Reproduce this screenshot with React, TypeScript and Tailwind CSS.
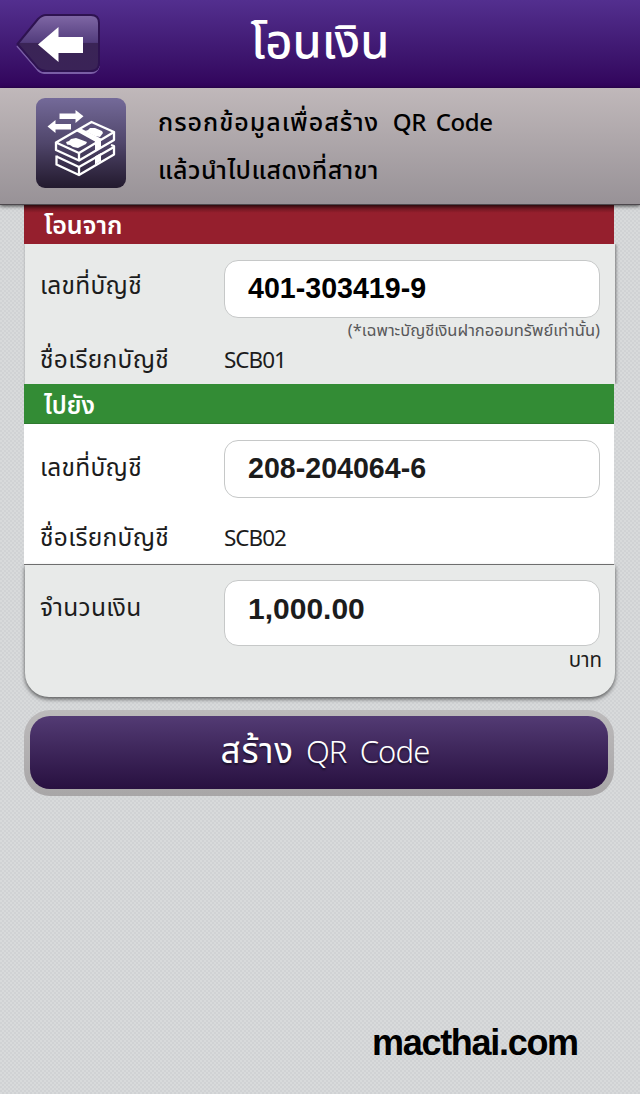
import React from 'react';

interface FieldBoxProps {
  value: string;
  className?: string;
}

function BackButton() {
  return (
    <button type="button" aria-label="Back" className="h-[62px] w-[86px]">
      <svg width="86" height="62" viewBox="0 0 86 62" fill="none">
        <defs>
          <linearGradient id="backTop" x1="0" y1="0" x2="0" y2="1">
            <stop offset="0" stopColor="#8068a6" />
            <stop offset="0.49" stopColor="#523c7c" />
            <stop offset="0.5" stopColor="#3a2456" />
            <stop offset="1" stopColor="#3a2357" />
          </linearGradient>
        </defs>
        <path d="M1 33 L21 56 Q24 60 28 60 H75 Q81 60 83 53" stroke="#7a5ea6" strokeWidth="1.800" />
        <path
          d="M1.500 31 L22 6 Q26 2 30 2 H75 Q83 2 83 10 V50 Q83 58 75 58 H30 Q26 58 22 55 Z"
          fill="url(#backTop)"
          stroke="#2e1350"
          strokeWidth="2"
        />
        <path d="M22 31.500 L42.500 14 V24 H67 V40 H42.500 V49 Z" fill="#fff" />
      </svg>
    </button>
  );
}

function MoneyIcon() {
  return (
    <div className="h-[90px] w-[90px] shrink-0 overflow-hidden rounded-[9px] bg-linear-to-b from-[#746a99] via-[#50466b] to-[#231a2e]">
      <svg width="90" height="90" viewBox="0 0 90 90" fill="none">
        <path d="M23.500 15.500 H39.500 V12 L47.500 18.300 L39.500 25 V21 H23.500 Z" fill="#fff" />
        <path d="M35 26 H19.500 V22 L11.500 28.500 L19.500 35 V31.500 H35 Z" fill="#fff" />
        <g stroke="#fff" strokeWidth="2.300" strokeLinejoin="round">
          <path d="M20 44.500 L55.500 24 L78 34 L43 55 Z" />
          <path d="M20 44.500 V52 L43 62.500 L78 42 V34" />
          <path d="M43 55 V62.500" />
          <path d="M20.500 57.500 V66.500 L43 77 L78 56.500 V48 L75 47" />
          <path d="M20.500 58.500 L43 69 L78 49" />
          <path d="M43 69 V77" />
        </g>
        <path d="M30 44 L33 43 L35 41 L40 40 L43 41 L51 44 L50 46 L46 48 L42 50 L37 49 L34 47 L31 46.500 Z" fill="#fff" />
        <path d="M49 33 L52 32 L54 30 L59 30 L66 33 L67 35 L64 39 L59 38 Z" fill="#fff" />
        <path d="M40 33 L45 30.500 L65 40.500 V50 L59 53.500 V43.500 Z" fill="#fff" />
        <path d="M59 58.500 L65 55 V63 L59 66.500 Z" fill="#fff" />
      </svg>
    </div>
  );
}

function FieldBox({ value, className = 'h-[58px] pb-px text-[28.6px] text-black' }: FieldBoxProps) {
  return (
    <div
      className={`flex w-[376px] items-center rounded-[14px] border border-[#c6c8c8] bg-white pl-[23px] font-['Liberation_Sans',sans-serif] font-bold ${className}`}
    >
      {value}
    </div>
  );
}

function Label({ children }: { children: React.ReactNode }) {
  return (
    <div className="w-[184px] shrink-0 text-[24.5px] leading-[34px] tracking-[0.3px] whitespace-nowrap">
      {children}
    </div>
  );
}

function AccountName({ children }: { children: React.ReactNode }) {
  return <span className="text-[22.5px] leading-[34px] tracking-[-1px]">{children}</span>;
}

export default function App() {
  return (
    <div className="h-[1094px] w-[640px] overflow-hidden bg-[#d6d8da] bg-[repeating-conic-gradient(#d0d2d4_0_25%,#d8dadb_0_50%)] bg-size-[4px_4px] font-['Noto_Sans_Thai','Open_Sans',sans-serif] text-[#1c1c1c]">
      <header className="grid h-[88px] grid-cols-[86px_1fr_86px] items-center bg-linear-to-b from-[#532f8f] to-[#31045b] px-4">
        <BackButton />
        <h1 className="text-center text-[47px] leading-[60px] font-medium whitespace-nowrap text-white">
          โอนเงิน
        </h1>
      </header>

      <section className="relative flex h-[117px] gap-8 border-b border-[#4d484d] bg-linear-to-b from-[#c0b8ba] to-[#989297] pt-[10px] pl-9 shadow-[0_1px_4px_rgba(0,0,0,0.7)]">
        <MoneyIcon />
        <div className="pt-[2px] text-[25px] leading-[47px] font-medium whitespace-nowrap text-black">
          <p className="tracking-[1px]">
            กรอกข้อมูลเพื่อสร้าง{' '}
            <span className="ml-[6px] text-[24px] tracking-[-0.4px] [word-spacing:4px]">QR Code</span>
          </p>
          <p className="tracking-[0.5px]">แล้วนำไปแสดงที่สาขา</p>
        </div>
      </section>

      <main className="px-6">
        <div className="flex h-[39px] w-[590px] items-center bg-linear-to-b from-[#5c141c] via-[#951f2d] via-20% to-[#951f2d] pt-[5px] pl-5 text-[25px] font-semibold text-white">
          โอนจาก
        </div>
        <section className="ml-px h-[140px] w-[590px] bg-[#e8eae9] pt-4 pl-[15px] shadow-[1px_0_3px_rgba(0,0,0,0.45)] [clip-path:inset(0_-6px)]">
          <div className="flex">
            <Label>
              <div className="pt-[10px]">เลขที่บัญชี</div>
            </Label>
            <FieldBox value="401-303419-9" />
          </div>
          <p className="h-[26px] w-[560px] text-right text-[16.5px] leading-[26px] whitespace-nowrap text-[#58585a]">
            (*เฉพาะบัญชีเงินฝากออมทรัพย์เท่านั้น)
          </p>
          <div className="flex">
            <Label>ชื่อเรียกบัญชี</Label>
            <AccountName>SCB01</AccountName>
          </div>
        </section>

        <div className="flex h-10 w-[590px] items-center border-b border-[#2f7a30] bg-[#338c35] pt-[6px] pl-5 text-[24px] font-semibold text-white">
          ไปยัง
        </div>
        <section className="h-[141px] w-[590px] border-b border-[#777] bg-white pt-4 pl-4">
          <div className="flex">
            <Label>
              <div className="pt-[12px]">เลขที่บัญชี</div>
            </Label>
            <FieldBox value="208-204064-6" className="h-[58px] pb-px text-[28.6px] text-[#1c1c1c]" />
          </div>
          <div className="flex pt-6">
            <Label>ชื่อเรียกบัญชี</Label>
            <AccountName>SCB02</AccountName>
          </div>
        </section>
        <section className="ml-px h-[132px] w-[590px] rounded-b-[24px] bg-[#e8eae9] pt-[15px] pl-[15px] shadow-[0_2px_4px_rgba(0,0,0,0.6)]">
          <div className="flex">
            <Label>
              <div className="pt-[12px]">จำนวนเงิน</div>
            </Label>
            <FieldBox value="1,000.00" className="h-[66px] pb-[10px] text-[30px] text-[#1c1c1c]" />
          </div>
          <p className="w-[562px] text-right text-[20.5px] leading-[30px]">บาท</p>
        </section>

        <div className="mt-[13px] h-[86px] w-[590px] rounded-[26px] bg-linear-to-b from-[#bcbabb] to-[#a8a6a7] p-[6px]">
          <button
            type="button"
            className="flex h-[73px] w-[578px] items-baseline justify-center rounded-[20px] bg-linear-to-b from-[#533b74] to-[#281040] pl-3 text-[35px] leading-[73px] whitespace-pre text-white [text-shadow:0_2px_2px_rgba(0,0,0,0.5)]"
          >
            <span className="tracking-[0.8px]">สร้าง</span>
            <span className="ml-3 text-[31px] font-light tracking-[-0.9px] [word-spacing:6px]">QR Code</span>
          </button>
        </div>
        <p className="mt-[224px] ml-[348px] font-['Liberation_Sans',sans-serif] text-[36px] leading-[46px] font-bold tracking-[-1.3px] text-black">
          macthai.com
        </p>
      </main>
    </div>
  );
}
